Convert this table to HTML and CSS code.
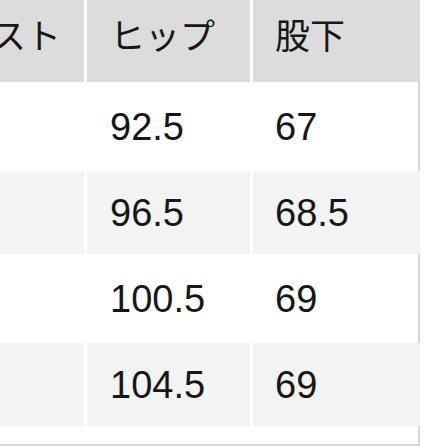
FILE: index.html
```html
<!DOCTYPE html>
<html lang="ja">
<head>
<meta charset="utf-8">
<title>サイズ表</title>
<link rel="stylesheet" href="styles.css">
</head>
<body>
<div class="sheet">
  <div class="row head">
    <div class="cell c1">ウエスト</div>
    <div class="cell c2">ヒップ</div>
    <div class="cell c3">股下</div>
  </div>
  <div class="body">
    <div class="row">
      <div class="cell c1"></div>
      <div class="cell c2">92.5</div>
      <div class="cell c3">67</div>
    </div>
    <div class="row alt">
      <div class="cell c1"></div>
      <div class="cell c2">96.5</div>
      <div class="cell c3">68.5</div>
    </div>
    <div class="row">
      <div class="cell c1"></div>
      <div class="cell c2">100.5</div>
      <div class="cell c3">69</div>
    </div>
    <div class="row alt">
      <div class="cell c1"></div>
      <div class="cell c2">104.5</div>
      <div class="cell c3">69</div>
    </div>
  </div>
</div>
</body>
</html>
```

FILE: styles.css
```css
html, body {
  margin: 0;
  padding: 0;
  overflow: hidden;
  background: #ffffff;
}

body {
  width: 446px;
  height: 446px;
  font-family: "Liberation Sans", "Noto Sans CJK JP", sans-serif;
  color: #171717;
}

.sheet {
  width: 536px;
  margin-left: -116px;
  margin-top: -5px;
}

.row {
  display: grid;
  grid-template-columns: 200px 163px 167px;
  column-gap: 3px;
  height: 83px;
}

.head {
  height: 87px;
}

.head .cell {
  background: #dcdcdc;
  padding-bottom: 4px;
  box-sizing: border-box;
  font-size: 35px;
}

.body {
  display: flex;
  flex-direction: column;
  gap: 3px;
  padding-top: 3px;
  padding-bottom: 18px;
  border-right: 2px solid #d6d6d6;
  border-bottom: 2px solid #d6d6d6;
}

.cell {
  display: flex;
  align-items: center;
  font-size: 38px;
  line-height: 1;
  white-space: nowrap;
}

.alt .cell {
  background: #f3f3f3;
}

.c1 {
  padding-left: 25px;
}

.head .c1 {
  padding-left: 37px;
}

.c2 {
  padding-left: 23px;
}

.c3 {
  padding-left: 22px;
}
```
